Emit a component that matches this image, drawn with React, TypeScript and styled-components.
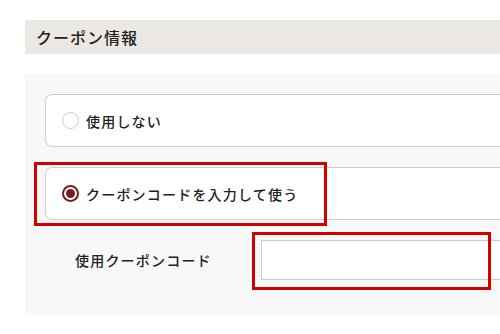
import React from "react";
import styled, { createGlobalStyle } from "styled-components";

const Global = createGlobalStyle`
  html, body { margin: 0; padding: 0; background: #fff; overflow: hidden; }
  body { font-family: "Noto Sans CJK JP", "Noto Sans", sans-serif; color: #222; }
`;

const Page = styled.div`
  width: 500px;
  box-sizing: border-box;
  padding: 20px 0 0 25px;
`;

const SectionHeader = styled.h2`
  margin: 0;
  height: 34px;
  display: flex;
  align-items: center;
  padding-left: 11px;
  background: #ebe7e2;
  font-size: 16px;
  font-weight: 500;
  letter-spacing: 1px;
  color: #222;
`;

const Panel = styled.div`
  margin-top: 20px;
  background: #f8f8f8;
  padding: 20px 0 35px 20px;
  display: flex;
  flex-direction: column;
  gap: 20px;
`;

const Wrap = styled.div`
  position: relative;
`;

const Card = styled.label`
  height: 53px;
  box-sizing: border-box;
  display: flex;
  align-items: center;
  gap: 7px;
  padding-left: 16px;
  background: #fff;
  border: 1px solid #cfcfcf;
  border-right: none;
  border-radius: 7px 0 0 7px;
  font-size: 14px;
  font-weight: 500;
  letter-spacing: 1.2px;
  color: #222;
`;

const Radio = styled.span<{ $checked?: boolean }>`
  width: 17px;
  height: 17px;
  box-sizing: border-box;
  border-radius: 50%;
  border: ${(p) => (p.$checked ? "2px solid #7a1c1c" : "1.5px solid #cccccc")};
  background: #fff;
  display: flex;
  align-items: center;
  justify-content: center;
  flex-shrink: 0;
  &::after {
    content: "";
    display: ${(p) => (p.$checked ? "block" : "none")};
    width: 9px;
    height: 9px;
    border-radius: 50%;
    background: #7a1c1c;
  }
`;

const Highlight = styled.div<{ $w: number; $h: number; $l: number; $t: number }>`
  position: absolute;
  left: ${(p) => p.$l}px;
  top: ${(p) => p.$t}px;
  width: ${(p) => p.$w}px;
  height: ${(p) => p.$h}px;
  box-sizing: border-box;
  border: 3px solid #d40000;
  pointer-events: none;
`;

const FieldRow = styled.div`
  display: flex;
  align-items: center;
  padding-left: 30px;
`;

const FieldLabel = styled.span`
  width: 186px;
  flex-shrink: 0;
  font-size: 14px;
  font-weight: 500;
  letter-spacing: 1.2px;
  color: #222;
`;

const InputWrap = styled.div`
  position: relative;
  flex: 1;
`;

const Input = styled.input`
  display: block;
  width: 100%;
  height: 40px;
  box-sizing: border-box;
  border: 1px solid #cccccc;
  border-right: none;
  background: #fff;
  outline: none;
  padding: 0 10px;
  font-size: 14px;
`;

export default function App() {
  return (
    <>
      <Global />
      <Page>
        <SectionHeader>クーポン情報</SectionHeader>
        <Panel>
          <Card>
            <Radio />
            使用しない
          </Card>
          <Wrap>
            <Card>
              <Radio $checked />
              クーポンコードを入力して使う
            </Card>
            <Highlight $l={-11} $t={-5} $w={293} $h={64} />
          </Wrap>
          <FieldRow>
            <FieldLabel>使用クーポンコード</FieldLabel>
            <InputWrap>
              <Input />
              <Highlight $l={-9} $t={-8} $w={239} $h={58} />
            </InputWrap>
          </FieldRow>
        </Panel>
      </Page>
    </>
  );
}
